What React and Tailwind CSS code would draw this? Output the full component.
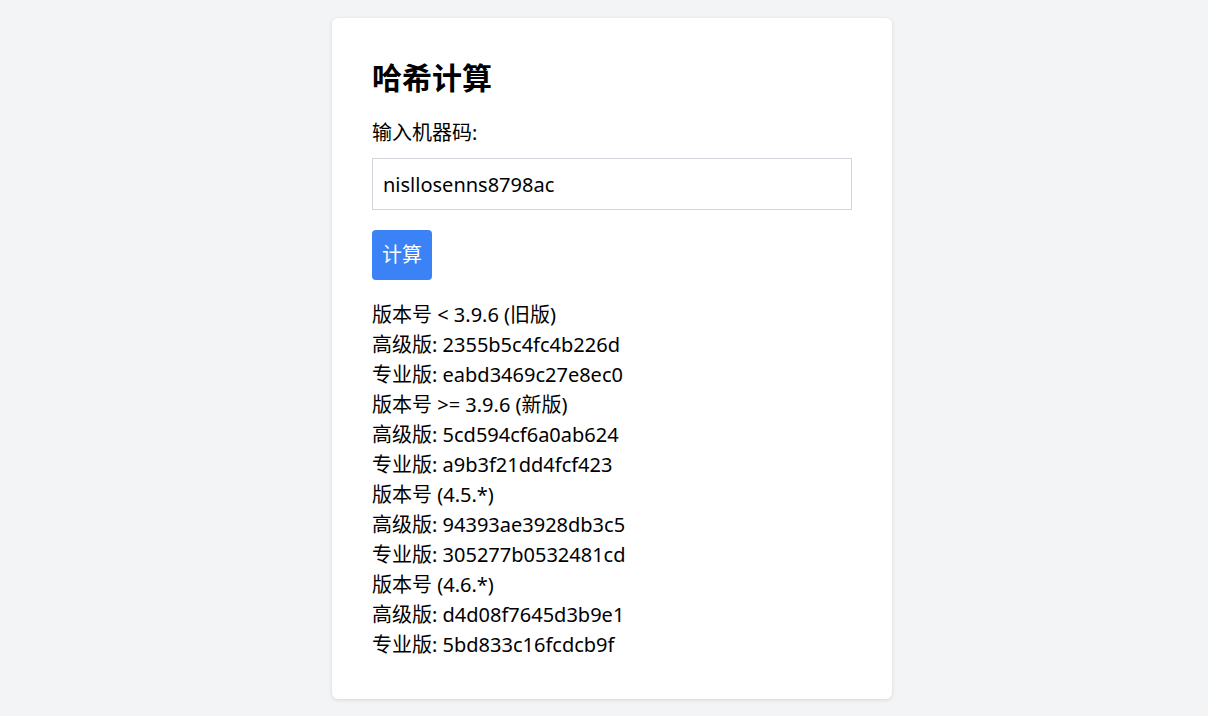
import React from "react";

const rows = [
  "版本号 < 3.9.6 (旧版)",
  "高级版: 2355b5c4fc4b226d",
  "专业版: eabd3469c27e8ec0",
  "版本号 >= 3.9.6 (新版)",
  "高级版: 5cd594cf6a0ab624",
  "专业版: a9b3f21dd4fcf423",
  "版本号 (4.5.*)",
  "高级版: 94393ae3928db3c5",
  "专业版: 305277b0532481cd",
  "版本号 (4.6.*)",
  "高级版: d4d08f7645d3b9e1",
  "专业版: 5bd833c16fcdcb9f",
];

export default function App() {
  return (
    <div className="min-h-[716px] bg-[#f3f4f6] pt-[18px] pl-4 flex justify-center items-start font-['Noto_Sans','Noto_Sans_CJK_SC',sans-serif] text-black">
      <div className="w-[560px] h-[681px] bg-white rounded-md shadow-[0_1px_4px_rgba(0,0,0,0.12)] p-10 flex flex-col">
        <h1 className="text-[30px] leading-[40px] font-bold">哈希计算</h1>
        <label className="mt-5 text-[20px] leading-[30px]">输入机器码:</label>
        <input
          className="mt-[10px] h-[52px] shrink-0 w-full border border-[#d1d5db] px-[10px] text-[20px] leading-[30px] outline-none"
          defaultValue="nisllosenns8798ac"
        />
        <div className="mt-5 shrink-0">
          <button className="h-[50px] w-[60px] bg-[#3b82f6] text-white rounded-[4px] text-[20px] leading-[30px]">计算</button>
        </div>
        <div className="mt-5 text-[20px] leading-[30px]">
          {rows.map((r) => (
            <div key={r}>{r}</div>
          ))}
        </div>
      </div>
    </div>
  );
}
